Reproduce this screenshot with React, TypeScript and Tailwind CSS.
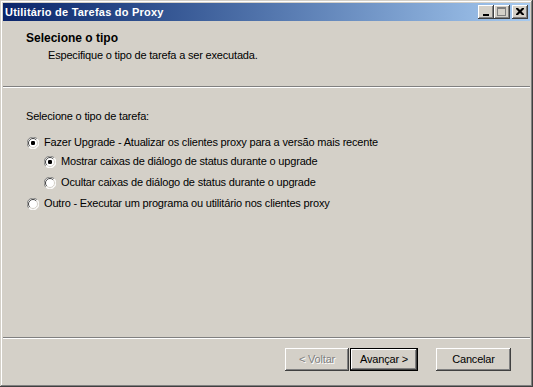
import React from "react";

function Radio({ checked }: { checked: boolean }) {
  return (
    <svg width="12" height="12" viewBox="0 0 12 12" className="shrink-0">
      <circle cx="6" cy="6" r="5.5" fill="#ffffff" />
      <path d="M10.2 1.8 A5.5 5.5 0 0 0 1.8 10.2" fill="none" stroke="#808080" strokeWidth="1" />
      <path d="M9.2 2.8 A4.5 4.5 0 0 0 2.8 9.2" fill="none" stroke="#404040" strokeWidth="1" />
      <path d="M1.8 10.2 A5.5 5.5 0 0 0 10.2 1.8" fill="none" stroke="#ffffff" strokeWidth="1" />
      <path d="M2.8 9.2 A4.5 4.5 0 0 0 9.2 2.8" fill="none" stroke="#d4d0c8" strokeWidth="1" />
      {checked && <rect x="4" y="4" width="4" height="4" rx="1.2" fill="#000000" />}
    </svg>
  );
}

function Btn({
  children,
  w,
  disabled,
  isDefault,
}: {
  children: React.ReactNode;
  w: string;
  disabled?: boolean;
  isDefault?: boolean;
}) {
  const base =
    "h-[23px] flex items-center justify-center bg-[#d4d0c8] text-[11px] leading-none tracking-[-0.18px] " + w;
  if (isDefault) {
    return (
      <div className={base + " border border-black shadow-[inset_-1px_-1px_#404040,inset_1px_1px_#ffffff,inset_-2px_-2px_#808080]"}>
        {children}
      </div>
    );
  }
  return (
    <div
      className={
        base +
        " shadow-[inset_-1px_-1px_#404040,inset_1px_1px_#ffffff,inset_-2px_-2px_#808080,inset_2px_2px_#d4d0c8] " +
        (disabled ? "text-[#808080] [text-shadow:1px_1px_#ffffff]" : "text-black")
      }
    >
      {children}
    </div>
  );
}

function TitleBtn({ children }: { children: React.ReactNode }) {
  return (
    <div className="w-[16px] h-[14px] bg-[#d4d0c8] shadow-[inset_-1px_-1px_#404040,inset_1px_1px_#ffffff,inset_-2px_-2px_#808080,inset_2px_2px_#d4d0c8] flex items-center justify-center">
      {children}
    </div>
  );
}

export default function App() {
  return (
    <div
      className="w-[533px] h-[387px] bg-[#d4d0c8] p-[3px] flex flex-col text-black shadow-[inset_-1px_-1px_#404040,inset_1px_1px_#d4d0c8,inset_-2px_-2px_#808080,inset_2px_2px_#ffffff]"
      style={{ fontFamily: '"Liberation Sans", Arial, sans-serif' }}
    >
      {/* Title bar */}
      <div className="h-[18px] bg-gradient-to-r from-[#0a246a] to-[#a6caf0] flex items-center pl-[2px] pr-[2px]">
        <div className="flex-1 text-white font-bold text-[11px] leading-none tracking-[0.22px]">Utilitário de Tarefas do Proxy</div>
        <div className="flex items-center">
          <TitleBtn>
            <div className="w-[6px] h-[2px] bg-black mt-[6px] -ml-[1px]" />
          </TitleBtn>
          <TitleBtn>
            <div className="w-[9px] h-[9px] border border-[#808080] border-t-2 -mt-[1px] -ml-[1px]" />
          </TitleBtn>
          <div className="w-[2px]" />
          <TitleBtn>
            <svg width="8" height="7" viewBox="0 0 8 7" className="-mt-[1px] -ml-[1px]">
              <path d="M0 0h2l2 2 2-2h2v1l-2.5 2.5L8 6v1H6L4 5 2 7H0V6l2.5-2.5L0 1z" fill="#000" />
            </svg>
          </TitleBtn>
        </div>
      </div>

      {/* Header */}
      <div className="h-[65px] flex flex-col pt-[10px] pl-[23px]">
        <div className="font-bold text-[12px] leading-[14px]">Selecione o tipo</div>
        <div className="text-[11px] leading-[13px] tracking-[-0.18px] pl-[22px] mt-[4px]">
          Especifique o tipo de tarefa a ser executada.
        </div>
      </div>
      <div className="h-[2px] border-t border-t-[#808080] border-b border-b-white" />

      {/* Content */}
      <div className="flex-1 flex flex-col pl-[23px] pt-[22px] text-[11px] leading-[13px] tracking-[-0.18px]">
        <div>Selecione o tipo de tarefa:</div>
        <div className="flex items-center gap-[5px] mt-[13px] pl-[1px]">
          <Radio checked />
          <span>Fazer Upgrade - Atualizar os clientes proxy para a versão mais recente</span>
        </div>
        <div className="flex items-center gap-[5px] mt-[6px] pl-[18px]">
          <Radio checked />
          <span>Mostrar caixas de diálogo de status durante o upgrade</span>
        </div>
        <div className="flex items-center gap-[5px] mt-[8px] pl-[18px]">
          <Radio checked={false} />
          <span>Ocultar caixas de diálogo de status durante o upgrade</span>
        </div>
        <div className="flex items-center gap-[5px] mt-[8px] pl-[1px]">
          <Radio checked={false} />
          <span>Outro - Executar um programa ou utilitário nos clientes proxy</span>
        </div>
      </div>

      <div className="h-[2px] border-t border-t-[#808080] border-b border-b-white" />

      {/* Footer */}
      <div className="h-[45px] flex items-start justify-end pt-[9px] pr-[19px]">
        <Btn w="w-[64px]" disabled>
          &lt; Voltar
        </Btn>
        <div className="w-[1px]" />
        <Btn w="w-[68px]" isDefault>
          Avançar &gt;
        </Btn>
        <div className="w-[18px]" />
        <Btn w="w-[75px]">Cancelar</Btn>
      </div>
    </div>
  );
}
